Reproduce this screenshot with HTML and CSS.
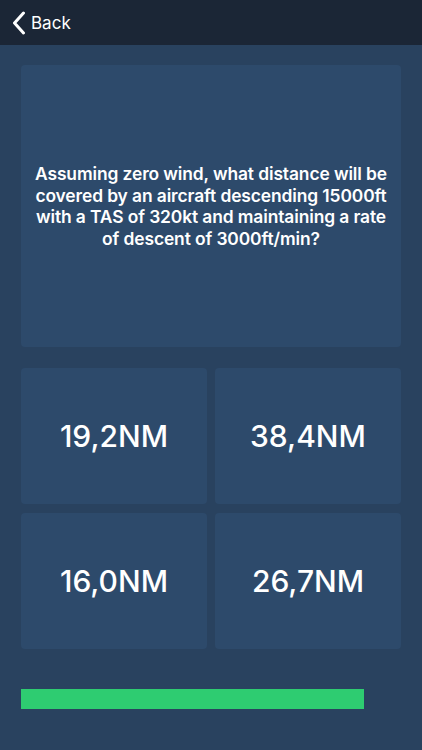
FILE: index.html
```html
<!DOCTYPE html>
<html>
<head>
<meta charset="utf-8">
<link rel="stylesheet" href="styles.css">
</head>
<body>
<header class="navbar">
  <a class="back">
    <svg class="chevron" width="14" height="24" viewBox="0 0 14 24"><path d="M11.5 2 L2.5 12 L11.5 22" fill="none" stroke="#ffffff" stroke-width="3" stroke-linecap="round" stroke-linejoin="round"/></svg>
    <span>Back</span>
  </a>
</header>
<main class="content">
  <section class="question">
    <p>Assuming zero wind, what distance will be covered by an aircraft descending 15000ft with a TAS of 320kt and maintaining a rate of descent of 3000ft/min?</p>
  </section>
  <section class="answers">
    <div class="answer">19,2NM</div>
    <div class="answer">38,4NM</div>
    <div class="answer">16,0NM</div>
    <div class="answer">26,7NM</div>
  </section>
  <div class="progress"><div class="progress-fill" style="width: 90.3%"></div></div>
</main>
</body>
</html>
```
FILE: styles.css
```css
html, body {
  margin: 0;
  padding: 0;
  height: 100%;
}
body {
  background: #29425f;
  font-family: Inter, "Liberation Sans", sans-serif;
  color: #ffffff;
}
.navbar {
  height: 45px;
  background: #1b2636;
  display: flex;
  align-items: center;
  padding-left: 12px;
}
.back {
  display: flex;
  align-items: center;
  gap: 5px;
  font-size: 17px;
  color: #ffffff;
}
.chevron {
  display: block;
}
.content {
  padding: 20px 21px 0 21px;
}
.question {
  height: 282px;
  background: #2d4a6b;
  border-radius: 4px;
  display: flex;
  align-items: center;
  justify-content: center;
  padding: 0 8px;
}
.question p {
  margin: 0;
  text-align: center;
  font-size: 17.4px;
  line-height: 21.5px;
  font-weight: 600;
  letter-spacing: -0.1px;
}
.answers {
  margin-top: 21px;
  display: grid;
  grid-template-columns: 1fr 1fr;
  column-gap: 8px;
  row-gap: 9px;
}
.answer {
  height: 136px;
  background: #2d4a6b;
  border-radius: 4px;
  display: flex;
  align-items: center;
  justify-content: center;
  font-size: 30px;
  font-weight: 500;
}
.progress {
  margin-top: 40px;
  height: 20px;
}
.progress-fill {
  height: 100%;
  background: #2ecc71;
}
```
